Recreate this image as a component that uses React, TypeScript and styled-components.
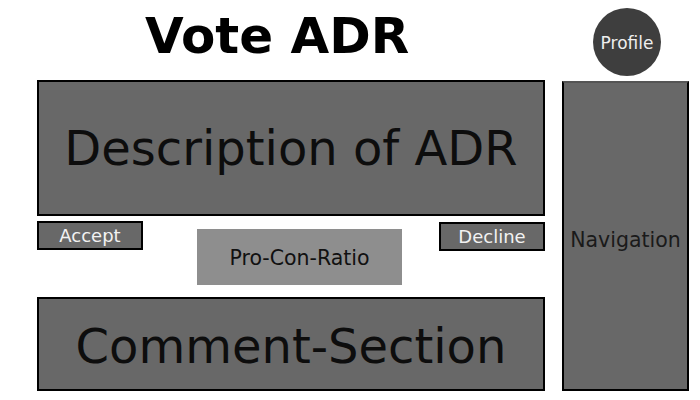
import React from "react";
import styled, { createGlobalStyle } from "styled-components";

const Global = createGlobalStyle`
  html, body { margin: 0; padding: 0; background: #ffffff; }
  body { font-family: "DejaVu Sans", "Liberation Sans", sans-serif; }
`;

const Page = styled.div`
  width: 700px;
  height: 400px;
  display: flex;
  padding-left: 37px;
  gap: 17px;
  box-sizing: border-box;
`;

const MainColumn = styled.div`
  width: 508px;
  display: flex;
  flex-direction: column;
`;

const SideColumn = styled.div`
  width: 127px;
  display: flex;
  flex-direction: column;
  align-items: center;
`;

const Title = styled.h1`
  margin: 0;
  height: 80px;
  box-sizing: border-box;
  padding: 7px 0 0 108px;
  font-family: "DejaVu Sans", sans-serif;
  font-weight: 700;
  font-size: 50px;
  line-height: normal;
  color: #000;
`;

const Panel = styled.div<{ $height: number; $mt?: number; $pt?: number }>`
  height: ${(p) => p.$height}px;
  margin-top: ${(p) => p.$mt ?? 0}px;
  padding-top: ${(p) => p.$pt ?? 0}px;
  box-sizing: border-box;
  border: 2px solid #000;
  background: #686868;
  display: flex;
  align-items: center;
  justify-content: center;
  font-size: 48px;
  color: #0d0d0d;
`;

const ActionRow = styled.div`
  height: 64px;
  margin-top: 5px;
  display: flex;
  align-items: flex-start;
`;

const VoteButton = styled.button<{ $mt?: number }>`
  width: 106px;
  height: 29px;
  margin-top: ${(p) => p.$mt ?? 0}px;
  padding: 0;
  box-sizing: border-box;
  border: 2px solid #000;
  background: #686868;
  color: #f2f2f2;
  font-family: "DejaVu Sans", sans-serif;
  font-size: 18px;
  display: flex;
  align-items: center;
  justify-content: center;
`;

const Ratio = styled.div`
  width: 205px;
  height: 56px;
  margin: 8px 0 0 54px;
  padding-top: 2px;
  box-sizing: border-box;
  background: #8e8e8e;
  display: flex;
  align-items: center;
  justify-content: center;
  font-size: 20.5px;
  color: #111;
`;

const Spacer = styled.div`
  flex: 1;
`;

const ProfileBadge = styled.div`
  width: 68px;
  height: 68px;
  margin-top: 8px;
  margin-left: 3px;
  padding-top: 2px;
  box-sizing: border-box;
  border-radius: 50%;
  background: #3e3e3e;
  color: #eeeeee;
  font-size: 17px;
  display: flex;
  align-items: center;
  justify-content: center;
`;

const Navigation = styled.nav`
  width: 127px;
  height: 310px;
  margin-top: 5px;
  box-sizing: border-box;
  border: 2px solid #000;
  border-top-color: #555;
  background: #686868;
  display: flex;
  align-items: center;
  justify-content: center;
  font-size: 20.5px;
  color: #1a1a1a;
  padding-top: 8px;
`;

export default function App() {
  return (
    <>
      <Global />
      <Page>
        <MainColumn>
          <Title>Vote ADR</Title>
          <Panel $height={136}>Description of ADR</Panel>
          <ActionRow>
            <VoteButton>Accept</VoteButton>
            <Ratio>Pro-Con-Ratio</Ratio>
            <Spacer />
            <VoteButton $mt={1}>Decline</VoteButton>
          </ActionRow>
          <Panel $height={94} $mt={12} $pt={3}>Comment-Section</Panel>
        </MainColumn>
        <SideColumn>
          <ProfileBadge>Profile</ProfileBadge>
          <Navigation>Navigation</Navigation>
        </SideColumn>
      </Page>
    </>
  );
}
